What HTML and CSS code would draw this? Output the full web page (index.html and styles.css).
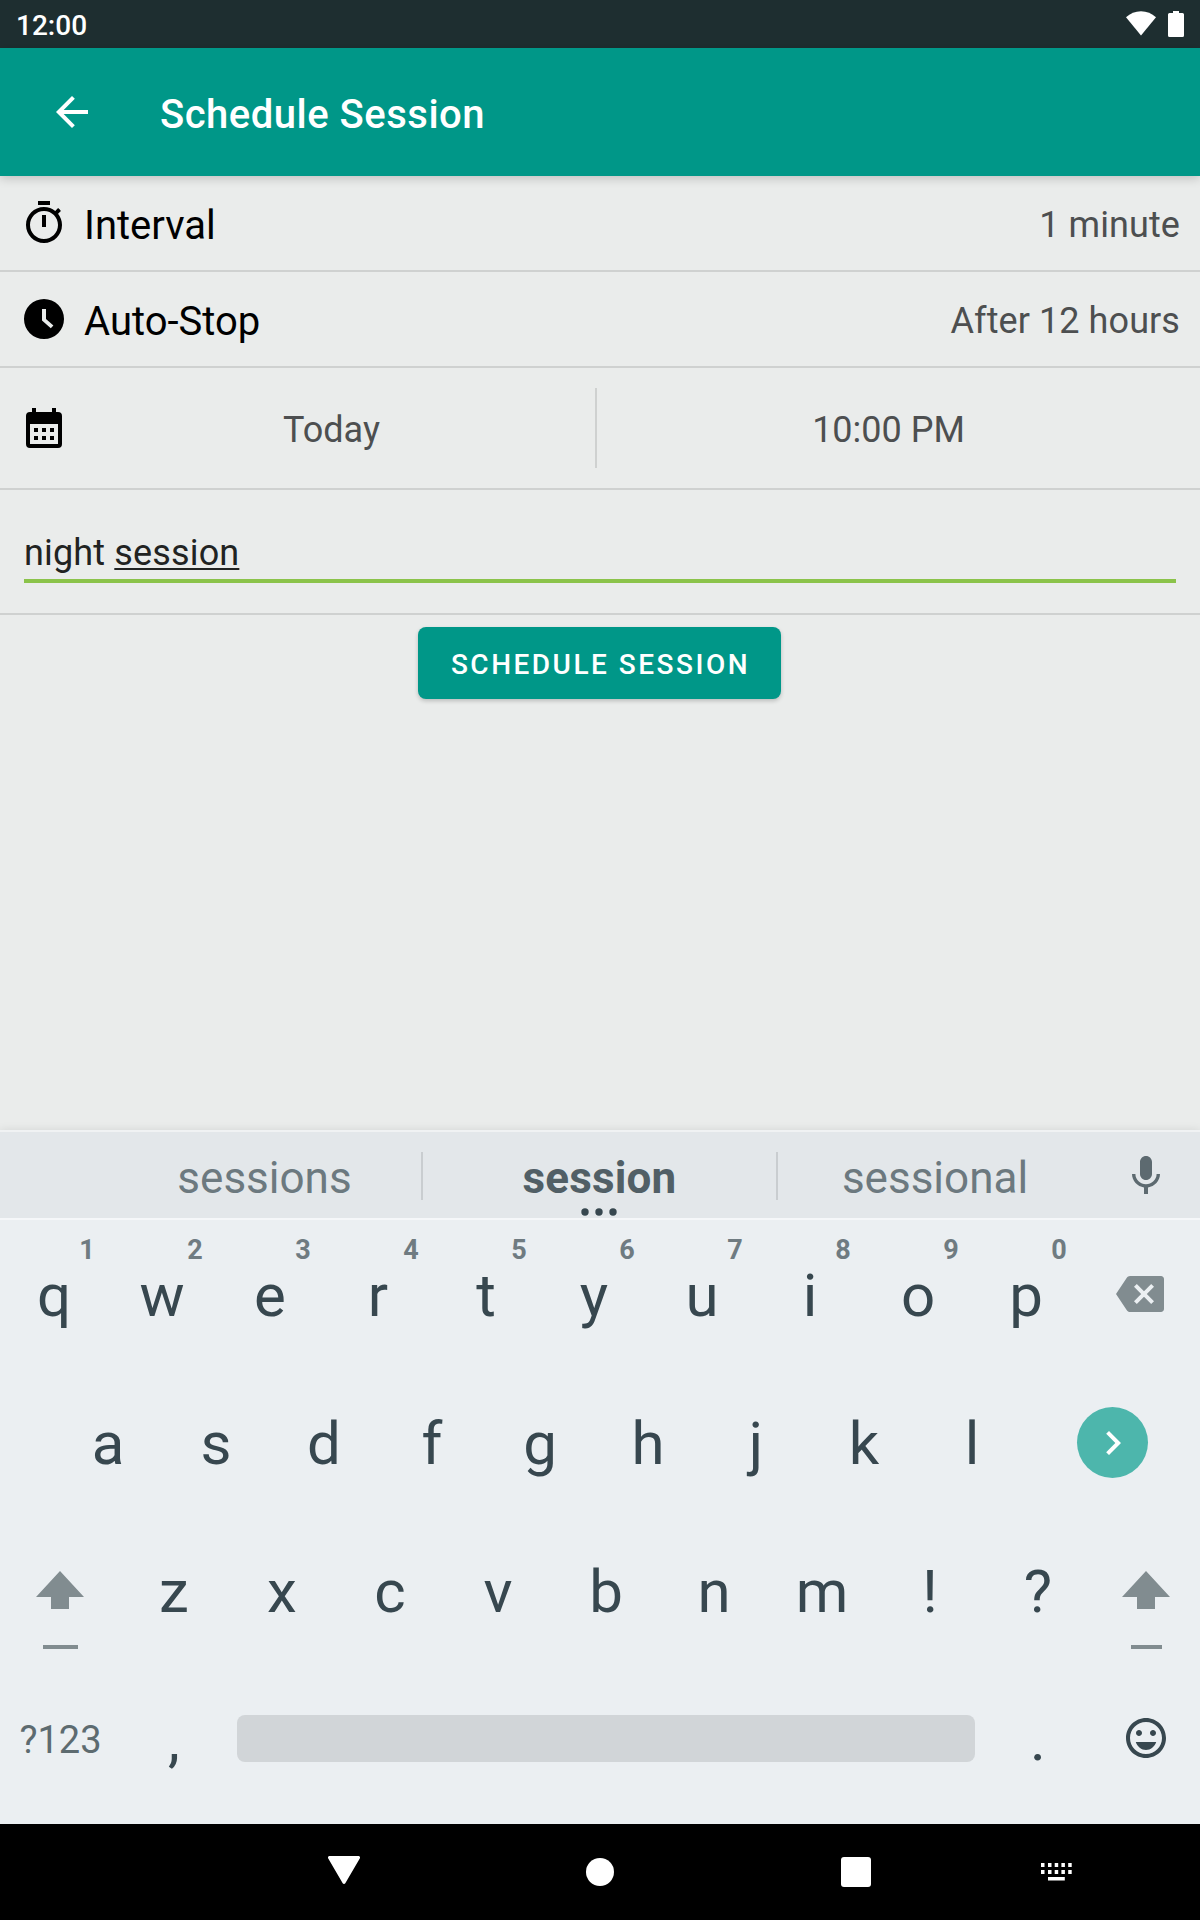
FILE: index.html
```html
<!DOCTYPE html>
<html lang="en">
<head>
<meta charset="utf-8">
<title>Schedule Session</title>
<link rel="stylesheet" href="styles.css">
</head>
<body>
<div class="screen">
  <div class="status">
    <span class="clock">12:00</span>
    <svg class="wifi" width="30" height="25" viewBox="0 0 30 25"><path d="M15 24.500 0 6.300C4.200 2.400 9.300.3 15 .3S25.800 2.400 30 6.300Z"/></svg>
    <svg class="battery" width="16" height="26" viewBox="0 0 16 26"><path d="M5 0h6v2h3.500a1.500 1.500 0 0 1 1.500 1.500v21a1.500 1.500 0 0 1-1.500 1.500h-13A1.500 1.500 0 0 1 0 24.500v-21A1.500 1.500 0 0 1 1.500 2H5z"/></svg>
  </div>
  <header class="toolbar">
    <svg width="48" height="48" viewBox="0 0 24 24"><path d="M20 11H7.830l5.590-5.590L12 4l-8 8 8 8 1.410-1.410L7.830 13H20v-2z"/></svg>
    <h1 class="title">Schedule Session</h1>
  </header>
  <main class="content">
    <div class="row row-interval">
      <svg width="48" height="48" viewBox="0 0 24 24"><path d="M15 1H9v2h6V1zm-4 13h2V8h-2v6zm8.030-6.610l1.420-1.420c-.43-.51-.9-.99-1.410-1.410l-1.420 1.420C16.070 4.740 14.120 4 12 4c-4.970 0-9 4.030-9 9s4.020 9 9 9 9-4.030 9-9c0-2.120-.74-4.070-1.970-5.610zM12 20c-3.870 0-7-3.130-7-7s3.130-7 7-7 7 3.130 7 7-3.130 7-7 7z"/></svg>
      <span class="label">Interval</span>
      <span class="value">1 minute</span>
    </div>
    <div class="row row-stop">
      <svg width="48" height="48" viewBox="0 0 24 24"><path fill-rule="evenodd" d="M12 2a10 10 0 1 0 0 20 10 10 0 0 0 0-20zM11 7h2v5l3.700 3.200-1.300 1.400L11 12.800z"/></svg>
      <span class="label">Auto-Stop</span>
      <span class="value">After 12 hours</span>
    </div>
    <div class="row row-date">
      <svg class="calendar" width="48" height="48" viewBox="0 0 24 24"><path fill-rule="evenodd" d="M6 1h2v2h8V1h2v2h1a2 2 0 0 1 2 2v14a2 2 0 0 1-2 2H5a2 2 0 0 1-2-2V5a2 2 0 0 1 2-2h1zM5 9v10h14V9zM7 11h2v2H7zM11 11h2v2h-2zM15 11h2v2h-2zM7 15h2v2H7zM11 15h2v2h-2zM15 15h2v2h-2z"/></svg>
      <span class="pick pick-day">Today</span>
      <span class="split"></span>
      <span class="pick pick-time">10:00 PM</span>
    </div>
    <div class="row-name">
      <div class="field">night <span class="composing">session</span></div>
    </div>
    <button class="submit">SCHEDULE SESSION</button>
  </main>
  <section class="keyboard">
    <div class="suggestions">
      <span class="word word-left">sessions</span>
      <span class="bar"></span>
      <span class="word word-main">session<svg class="dots" width="36" height="8" viewBox="0 0 36 8"><circle cx="4" cy="4" r="3.700"/><circle cx="18" cy="4" r="3.700"/><circle cx="32" cy="4" r="3.700"/></svg></span>
      <span class="bar"></span>
      <span class="word word-right">sessional</span>
      <svg class="mic" width="48" height="48" viewBox="0 0 24 24"><path d="M12 14c1.660 0 3-1.340 3-3V5c0-1.660-1.340-3-3-3S9 3.340 9 5v6c0 1.660 1.340 3 3 3zM17.300 11c0 3-2.540 5.100-5.300 5.100S6.700 14 6.700 11H5c0 3.410 2.720 6.230 6 6.720V21h2v-3.280c3.280-.48 6-3.300 6-6.720z"/></svg>
    </div>
    <div class="keys">
      <span class="key">q<i class="hint">1</i></span><span class="key">w<i class="hint">2</i></span><span class="key">e<i class="hint">3</i></span><span class="key">r<i class="hint">4</i></span><span class="key">t<i class="hint">5</i></span><span class="key">y<i class="hint">6</i></span><span class="key">u<i class="hint">7</i></span><span class="key">i<i class="hint">8</i></span><span class="key">o<i class="hint">9</i></span><span class="key">p<i class="hint">0</i></span>
      <span class="action muted"><svg width="48" height="48" viewBox="0 0 24 24"><path d="M22.500 3H7c-.69 0-1.230.35-1.590.88L0 12l5.410 8.110c.36.53.9.89 1.590.89h15.500c.83 0 1.500-.67 1.500-1.500v-15c0-.83-.67-1.500-1.500-1.500zM19 15.590L17.590 17 14 13.410 10.410 17 9 15.590 12.590 12 9 8.410 10.410 7 14 10.590 17.590 7 19 8.410 15.410 12 19 15.590z"/></svg></span>
    </div>
    <div class="keys keys-inset">
      <span class="key">a</span><span class="key">s</span><span class="key">d</span><span class="key">f</span><span class="key">g</span><span class="key">h</span><span class="key">j</span><span class="key">k</span><span class="key">l</span>
      <span class="action action-enter"><span class="enter"><svg width="48" height="48" viewBox="0 0 24 24"><path d="M10 6L8.590 7.410 13.170 12l-4.580 4.590L10 18l6-6z"/></svg></span></span>
    </div>
    <div class="keys">
      <span class="action action-wide muted"><svg width="48" height="80" viewBox="0 0 48 80"><path d="M24 1 48 27H33v12H15V27H0zM7 75h35v4H7z"/></svg></span>
      <span class="key">z</span><span class="key">x</span><span class="key">c</span><span class="key">v</span><span class="key">b</span><span class="key">n</span><span class="key">m</span><span class="key">!</span><span class="key">?</span>
      <span class="action muted"><svg width="48" height="80" viewBox="0 0 48 80"><path d="M24 1 48 27H33v12H15V27H0zM9 75h31v4H9z"/></svg></span>
    </div>
    <div class="keys">
      <span class="action action-wide symbols">?123</span>
      <span class="key">,</span>
      <span class="space"></span>
      <span class="key">.</span>
      <span class="action emoji"><svg width="48" height="48" viewBox="0 0 24 24"><path d="M11.990 2C6.470 2 2 6.480 2 12s4.470 10 9.990 10C17.520 22 22 17.520 22 12S17.520 2 11.990 2zM12 20c-4.420 0-8-3.580-8-8s3.580-8 8-8 8 3.580 8 8-3.580 8-8 8zm3.500-9c.83 0 1.500-.67 1.500-1.500S16.330 8 15.500 8 14 8.670 14 9.500s.67 1.500 1.500 1.500zm-7 0c.83 0 1.500-.67 1.500-1.500S9.330 8 8.500 8 7 8.670 7 9.500 7.670 11 8.500 11zm3.500 7c2.330 0 4.310-1.760 5.110-4H6.890c.8 2.240 2.780 4 5.110 4z"/></svg></span>
    </div>
  </section>
  <nav class="navbar">
    <svg class="nav-back" width="34" height="30" viewBox="0 0 34 30"><path d="M2.500 1h29a1.500 1.500 0 0 1 1.400 2.200L18.300 28.200a1.500 1.500 0 0 1-2.600 0L1.100 3.200A1.500 1.500 0 0 1 2.500 1z"/></svg>
    <span class="nav-home"></span>
    <span class="nav-recent"></span>
    <svg class="nav-ime" width="31" height="18" viewBox="0 0 31 18"><path d="M0 0h3.500v4H0zM7 0h3.500v4H7zM13.700 0h3.500v4h-3.500zM20.400 0h3.500v4h-3.500zM27.200 0h3.500v4h-3.500zM0 7h3.500v4H0zM7 7h3.500v4H7zM13.700 7h3.500v4h-3.500zM20.400 7h3.500v4h-3.500zM27.200 7h3.500v4h-3.500zM7 14h16.800v3.500H7z"/></svg>
  </nav>
</div>
</body>
</html>
```
FILE: styles.css
```css
* { box-sizing: border-box; }
body { margin: 0; font-family: Roboto, sans-serif; }
svg { display: block; flex: none; fill: currentColor; }

.screen {
  width: 1200px;
  height: 1920px;
  display: flex;
  flex-direction: column;
  overflow: hidden;
  background: #eaeceb;
  color: #000;
}

.status {
  height: 48px;
  flex: none;
  display: flex;
  align-items: flex-start;
  padding: 11px 16px 0;
  background: #1e2e30;
  color: #fff;
}
.clock {
  margin-right: auto;
  font-size: 28px;
  font-weight: 500;
  line-height: 29px;
}
.battery { margin-left: 12px; }

.toolbar {
  height: 128px;
  flex: none;
  display: flex;
  align-items: center;
  padding-left: 48px;
  background: #009788;
  color: #fff;
  box-shadow: 0 2px 10px rgba(0, 0, 0, .2);
}
.title {
  margin: 4px 0 0 64px;
  font-size: 40px;
  font-weight: 500;
  letter-spacing: .5px;
}

.content {
  flex: 1;
  display: flex;
  flex-direction: column;
}
.row {
  display: flex;
  align-items: center;
  padding: 0 20px;
  border-bottom: 2px solid #cfd1d0;
}
.row-interval { height: 96px; }
.row-stop { height: 96px; }
.row-date { height: 122px; }
.label {
  margin: 4px auto 0 16px;
  font-size: 40px;
}
.value, .pick {
  font-size: 36px;
  color: #4d4f50;
}
.value { margin-top: 3px; letter-spacing: .08px; }
.calendar { margin-top: 4px; }
.pick { text-align: center; padding-top: 3px; }
.pick-day { width: 527px; }
.pick-time { flex: 1; }
.split { width: 2px; height: 80px; background: #cfd1d0; }

.row-name {
  height: 125px;
  padding: 31px 24px 0;
  border-bottom: 2px solid #cfd1d0;
}
.field {
  height: 62px;
  border-bottom: 4px solid #8bc34a;
  font-size: 36px;
  line-height: 64px;
  letter-spacing: .15px;
  color: #212322;
}
.composing {
  text-decoration: underline;
  text-decoration-thickness: 2px;
  text-underline-offset: 3px;
  text-decoration-skip-ink: none;
}
.submit {
  align-self: center;
  width: 363px;
  height: 72px;
  margin: 12px 0 0 -1px;
  padding: 2px 0 0 2px;
  border: 0;
  border-radius: 8px;
  background: #009788;
  color: #fff;
  font: 500 28px Roboto, sans-serif;
  letter-spacing: 2.5px;
  box-shadow: 0 2px 4px rgba(0, 0, 0, .2);
}

.keyboard {
  height: 694px;
  flex: none;
  background: #ebeff2;
  color: #37474f;
  box-shadow: 0 -1px 8px rgba(0, 0, 0, .08);
}
.suggestions {
  height: 90px;
  display: flex;
  align-items: center;
  padding: 2px 30px 0 108px;
  border-top: 2px solid #f0f2f3;
  border-bottom: 2px solid #f5f7f9;
  background: #e3e7ea;
}
.word {
  padding-top: 4px;
  text-align: center;
  font-size: 44px;
  color: #6c797f;
}
.word-left { width: 313px; }
.word-main {
  position: relative;
  width: 353px;
  font-weight: 700;
  letter-spacing: .15px;
  color: #515f66;
}
.word-right { width: 314px; }
.bar { width: 2px; height: 48px; background: #c9cdd0; }
.dots {
  position: absolute;
  left: 158px;
  bottom: -12px;
  color: #37474f;
}
.mic { margin-left: auto; color: #5d6a70; }

.keys { height: 148px; display: flex; }
.keys-inset { padding-left: 54px; }
.key {
  position: relative;
  width: 108px;
  padding-top: 2px;
  text-align: center;
  font-size: 60px;
  line-height: 148px;
}
.hint {
  position: absolute;
  top: 14px;
  left: 73px;
  width: 28px;
  font-size: 27px;
  font-style: normal;
  font-weight: 700;
  line-height: 32px;
  color: #6f7b81;
}
.action {
  flex: 1;
  display: flex;
  align-items: center;
  justify-content: center;
}
.action-wide { flex: 0 0 120px; }
.action-enter { padding: 1px 1px 0 0; }
.muted { color: #818c90; }
.muted svg[height="80"] { align-self: flex-start; margin-top: 54px; }
.symbols { padding: 4px 0 0 1px; font-size: 38px; color: #5d6b70; }
.emoji { color: #37474f; }
.enter {
  width: 71px;
  height: 71px;
  display: flex;
  align-items: center;
  justify-content: center;
  border-radius: 50%;
  background: #4db6ac;
  color: #fff;
}
.space {
  width: 738px;
  height: 47px;
  margin: 51px 9px 0;
  border-radius: 8px;
  background: #d1d5d8;
}

.navbar {
  height: 96px;
  flex: none;
  display: flex;
  padding-left: 327px;
  background: #000;
  color: #fff;
}
.nav-back { margin-top: 31px; }
.nav-home {
  width: 28px;
  height: 28px;
  margin: 34px 0 0 225px;
  border-radius: 50%;
  background: #fff;
}
.nav-recent {
  width: 30px;
  height: 30px;
  margin: 33px 0 0 227px;
  border-radius: 3px;
  background: #fff;
}
.nav-ime { margin: 39px 0 0 170px; }
```
